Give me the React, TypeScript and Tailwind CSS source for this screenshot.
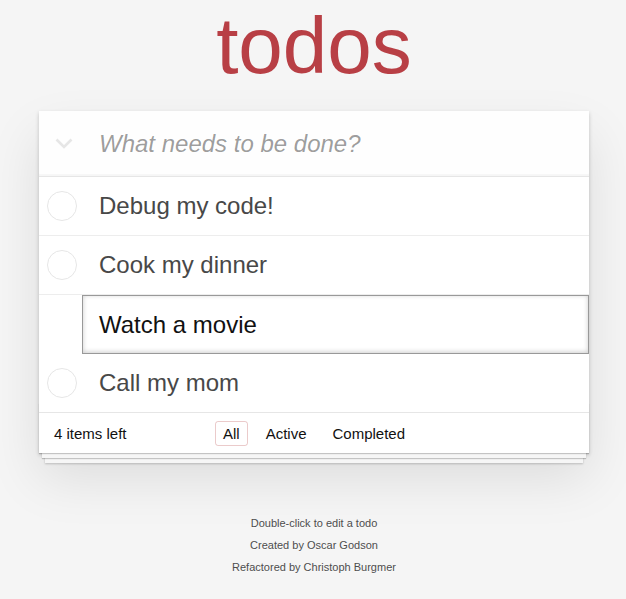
export default function App() {
  const font = { fontFamily: '"Liberation Sans", Arial, Helvetica, sans-serif' };
  const Circle = () => (
    <svg width="30" height="30" viewBox="0 0 30 30" className="ml-[8px] shrink-0">
      <circle cx="15" cy="15" r="14.5" fill="none" stroke="#e6e6e6" strokeWidth="1" />
    </svg>
  );
  const Item = ({ text, last }: { text: string; last?: boolean }) => (
    <li className={`flex items-center ${last ? "h-[58px]" : "h-[59px] border-b border-[#ededed]"}`}>
      <div className="w-[60px] shrink-0 flex items-center">
        <Circle />
      </div>
      <span className="text-[24px] leading-[29px] text-[#484848] -mt-[1px]">{text}</span>
    </li>
  );
  return (
    <div
      className="min-h-screen w-full bg-[#f5f5f5] text-[#111111] pt-[6px] pl-[2px] pb-[20px]"
      style={font}
    >
      <div className="mx-auto w-[550px]">
        <h1 className="h-[80px] text-center text-[80px] leading-[80px] font-extralight text-[#b83f45]">
          todos
        </h1>
        <section className="mt-[25px] bg-white shadow-[0_2px_4px_0_rgba(0,0,0,0.2),0_25px_50px_0_rgba(0,0,0,0.1)]">
          <header className="flex h-[65px] items-center bg-[rgba(0,0,0,0.003)] shadow-[inset_0_-2px_1px_rgba(0,0,0,0.03)]">
            <div className="w-[60px] shrink-0 flex items-center">
              <svg width="18" height="11" viewBox="0 0 18 11" className="ml-[16px]">
                <polyline
                  points="1.5,1.5 9,9 16.5,1.5"
                  fill="none"
                  stroke="#e6e6e6"
                  strokeWidth="2.6"
                  strokeLinecap="butt"
                  strokeLinejoin="miter"
                />
              </svg>
            </div>
            <span className="text-[24px] italic leading-[29px] text-[rgba(0,0,0,0.4)]">
              What needs to be done?
            </span>
          </header>
          <ul className="border-t border-[#e6e6e6]">
            <Item text="Debug my code!" />
            <Item text="Cook my dinner" />
            <li className="h-[59px] pl-[43px]">
              <div className="flex h-full items-center border border-[#999999] px-[16px] shadow-[inset_0_-1px_5px_0_rgba(0,0,0,0.2)]">
                <span className="text-[24px] leading-[33px] text-[#111111]">Watch a movie</span>
              </div>
            </li>
            <Item text="Call my mom" last />
          </ul>
          <footer className="relative grid h-[41px] grid-cols-[1fr_auto_1fr] items-center border-t border-[#e6e6e6] px-[15px] text-[15px]">
            <div className="pointer-events-none absolute inset-x-0 bottom-0 h-[50px] overflow-hidden shadow-[0_1px_1px_rgba(0,0,0,0.2),0_8px_0_-3px_#f6f6f6,0_9px_1px_-3px_rgba(0,0,0,0.2),0_16px_0_-6px_#f6f6f6,0_17px_2px_-6px_rgba(0,0,0,0.2)]" />
            <span className="relative z-10 leading-[21px]">4 items left</span>
            <div className="relative z-10 flex items-center gap-[10px]">
              <span className="rounded-[3px] border border-[rgba(175,47,47,0.25)] px-[7px] py-[3px] leading-[17px]">All</span>
              <span className="rounded-[3px] border border-transparent px-[7px] py-[3px] leading-[17px]">Active</span>
              <span className="rounded-[3px] border border-transparent px-[7px] py-[3px] leading-[17px]">Completed</span>
            </div>
            <div />
          </footer>
        </section>
        <div className="mt-[65px] flex flex-col items-center gap-[11px] text-[11px] leading-[11px] text-[#4d4d4d] [text-shadow:0_1px_0_rgba(255,255,255,0.5)]">
          <p>Double-click to edit a todo</p>
          <p>Created by Oscar Godson</p>
          <p>Refactored by Christoph Burgmer</p>
        </div>
      </div>
    </div>
  );
}
